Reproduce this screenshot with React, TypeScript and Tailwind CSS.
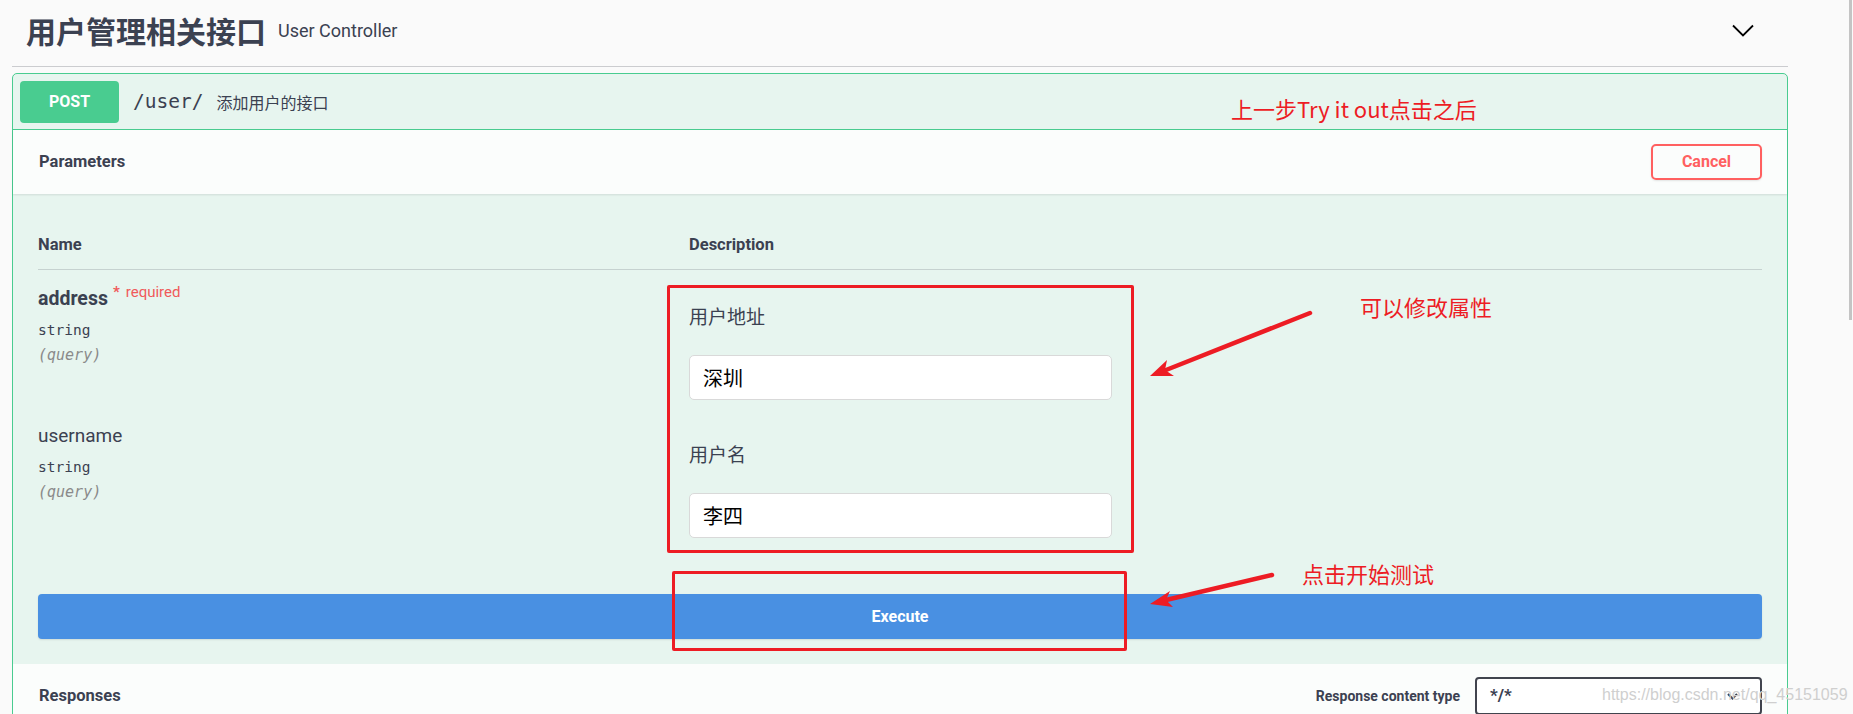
const mono = "font-['DejaVu_Sans_Mono',monospace]";
const cjk = "font-['Noto_Sans_CJK_SC',sans-serif]";

type Param = {
  name: string;
  required?: boolean;
  label: string;
  value: string;
};

const params: Param[] = [
  { name: "address", required: true, label: "用户地址", value: "深圳" },
  { name: "username", label: "用户名", value: "李四" },
];

function ParamRow({ p }: { p: Param }) {
  return (
    <div className="flex h-[138px]">
      <div className="w-[651px] pt-[15px]">
        <div className={`leading-[26px] ${p.required ? "text-[19.5px] font-bold" : "text-[19px] font-normal"}`}>
          {p.name}
          {p.required && (
            <>
              <span className="ml-[5px] align-super text-[15px] font-bold leading-none text-[#f05a5a]">*</span>
              <span className="ml-[6px] align-super text-[15px] font-normal leading-none text-[#f05a5a]">required</span>
            </>
          )}
        </div>
        <div className={`mt-[7px] text-[14.5px] leading-[22px] ${mono}`}>string</div>
        <div className={`mt-[3px] text-[15px] italic leading-[22px] text-[#8a8a8a] ${mono}`}>(query)</div>
      </div>
      <div className="w-[423px] pt-[33px]">
        <p className={`text-[19px] leading-[26px] ${cjk}`}>{p.label}</p>
        <input
          readOnly
          value={p.value}
          className={`mt-[26px] h-[45px] w-full rounded-[5px] border border-[#d9d9d9] bg-white px-[13px] text-[20px] text-black outline-none ${cjk}`}
        />
      </div>
    </div>
  );
}

export default function App() {
  return (
    <div className="relative h-[714px] w-full overflow-hidden bg-[#fafafa] font-['Roboto','Noto_Sans_CJK_SC',sans-serif] text-[#3b4151]">
      <div className="flex">
        <div className="w-[1836px] pl-[12px] pr-[48px]">
          {/* tag header */}
          <div className="flex h-[67px] items-center border-b border-[#cbcccf] pb-[6px] pl-[14px] pr-[34px]">
            <h3 className={`text-[30px] font-bold leading-none ${cjk}`}>用户管理相关接口</h3>
            <span className="ml-[12px] text-[18px]">User Controller</span>
            <svg className="ml-auto" width="22" height="13" viewBox="0 0 22 13" fill="none">
              <path d="M1 1.5 L11 11.5 L21 1.5" stroke="#000" strokeWidth="1.8" />
            </svg>
          </div>

          {/* operation card */}
          <div className="mt-[6px] rounded-[5px] border border-[#49cc90] bg-[#e7f5ef]">
            <div className="flex h-[56px] items-center border-b border-[#49cc90] pl-[7px]">
              <span className="flex h-[42px] w-[99px] items-center justify-center rounded-[4px] bg-[#49cc90] text-[16px] font-bold text-white">
                POST
              </span>
              <span className={`ml-[14px] text-[19.5px] ${mono}`}>/user/</span>
              <span className={`ml-[13px] text-[16px] ${cjk}`}>添加用户的接口</span>
            </div>

            <div className="flex h-[64px] items-center justify-between bg-[#fbfdfc] pl-[26px] pr-[25px] shadow-[0_1px_2px_rgba(0,0,0,0.1)]">
              <h4 className="text-[16.5px] font-bold">Parameters</h4>
              <button className="h-[36px] w-[111px] rounded-[5px] border-2 border-[#ff6060] bg-transparent text-[16px] font-bold text-[#ff6060] shadow-[0_1px_2px_rgba(0,0,0,0.1)]">
                Cancel
              </button>
            </div>

            <div className="px-[25px] pb-[25px] pt-[39px]">
              <div className="flex h-[37px] border-b border-[#c6d2d0] text-[16.5px] font-bold leading-[24px]">
                <div className="w-[651px]">Name</div>
                <div>Description</div>
              </div>
              {params.map((p) => (
                <ParamRow key={p.name} p={p} />
              ))}
              <button className="mt-[48px] h-[45px] w-full rounded-[4px] bg-[#4990e2] text-[16px] font-bold text-white shadow-[0_1px_2px_rgba(0,0,0,0.1)]">
                Execute
              </button>
            </div>

            <div className="flex h-[64px] items-center bg-[#fbfdfc] pl-[26px] pr-[25px]">
              <h4 className="text-[16.5px] font-bold">Responses</h4>
              <div className="ml-auto flex items-center gap-[15px]">
                <span className="text-[14px] font-bold">Response content type</span>
                <div className="flex h-[38px] w-[287px] items-center justify-between rounded-[4px] border-2 border-[#41444e] bg-white pl-[13px] pr-[22px]">
                  <span className="text-[17px] font-bold">*/*</span>
                  <svg width="11" height="7" viewBox="0 0 11 7" fill="none">
                    <path d="M1 1 L5.5 5.5 L10 1" stroke="#3b4151" strokeWidth="2" />
                  </svg>
                </div>
              </div>
            </div>
          </div>
        </div>

        {/* scrollbar */}
        <div className="flex w-[17px] justify-end">
          <div className="mr-[1px] h-[320px] w-[3px] bg-[#c4c4c4]" />
        </div>
      </div>

      {/* screenshot annotations */}
      <div className={`pointer-events-none absolute inset-0 text-[22px] leading-[30px] text-[#ed1c24] ${cjk}`}>
        <div className="absolute left-[1231px] top-[93px]">上一步Try it out点击之后</div>
        <div className="absolute left-[1360px] top-[291px]">可以修改属性</div>
        <div className="absolute left-[1302px] top-[558px]">点击开始测试</div>
        <div className="absolute left-[667px] top-[285px] h-[268px] w-[467px] rounded-[2px] border-[3px] border-[#ed1c24]" />
        <div className="absolute left-[672px] top-[571px] h-[80px] w-[455px] rounded-[2px] border-[3px] border-[#ed1c24]" />
        <svg className="absolute left-0 top-0" width="1853" height="714" viewBox="0 0 1853 714">
          <line x1="1310" y1="313" x2="1166" y2="370" stroke="#ed1c24" strokeWidth="4.5" strokeLinecap="round" />
          <polygon points="1150,376 1174,376 1165,370 1167,360" fill="#ed1c24" />
          <line x1="1272" y1="575" x2="1166" y2="600" stroke="#ed1c24" strokeWidth="4.5" strokeLinecap="round" />
          <polygon points="1150,604 1173,607 1166,600 1170,591" fill="#ed1c24" />
        </svg>
        <div className="absolute left-[1602px] top-[685px] font-['Liberation_Sans',sans-serif] text-[16px] leading-[20px] text-[#cfcfcf]">
          https://blog.csdn.net/qq_45151059
        </div>
      </div>
    </div>
  );
}
